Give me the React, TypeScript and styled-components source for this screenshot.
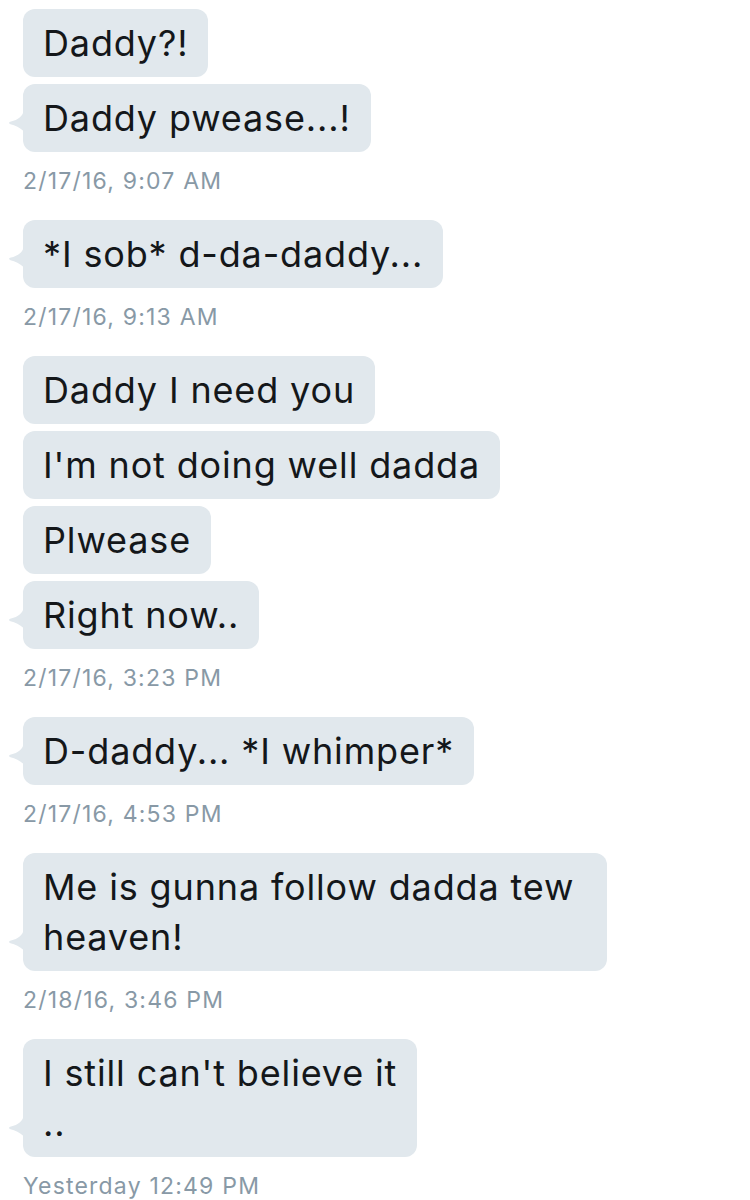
import React from "react";
import styled, { createGlobalStyle } from "styled-components";

const GlobalStyle = createGlobalStyle`
  html, body {
    margin: 0;
    padding: 0;
    background: #ffffff;
  }
  body {
    font-family: "Inter", "Noto Sans", "Liberation Sans", sans-serif;
    -webkit-font-smoothing: antialiased;
  }
`;

const Thread = styled.div`
  width: 750px;
  box-sizing: border-box;
  padding: 9px 0 0 23px;
  display: flex;
  flex-direction: column;
  align-items: flex-start;
`;

const Group = styled.div`
  display: flex;
  flex-direction: column;
  align-items: flex-start;
  gap: 7px;
  margin-bottom: 24px;
`;

const Bubble = styled.div`
  position: relative;
  box-sizing: border-box;
  max-width: 584px;
  padding: 9px 20px;
  background: #e1e8ed;
  border-radius: 12px;
  color: #14171a;
  font-size: 36px;
  line-height: 50px;
  letter-spacing: 0.85px;
  white-space: pre-wrap;
`;

const Tail = styled.svg`
  position: absolute;
  left: -14px;
  bottom: 21px;
  width: 14px;
  height: 20px;
  overflow: visible;
`;

const Stamp = styled.div`
  margin-top: 7px;
  font-size: 23px;
  line-height: 30px;
  letter-spacing: 1.2px;
  color: #8899a6;
`;

const groups: { lines: string[]; time: string }[] = [
  { lines: ["Daddy?!", "Daddy pwease...!"], time: "2/17/16, 9:07 AM" },
  { lines: ["*I sob* d-da-daddy..."], time: "2/17/16, 9:13 AM" },
  {
    lines: ["Daddy I need you", "I'm not doing well dadda", "Plwease", "Right now.."],
    time: "2/17/16, 3:23 PM",
  },
  { lines: ["D-daddy... *I whimper*"], time: "2/17/16, 4:53 PM" },
  { lines: ["Me is gunna follow dadda tew heaven!"], time: "2/18/16, 3:46 PM" },
  { lines: ["I still can't believe it\n.."], time: "Yesterday 12:49 PM" },
];

function BubbleTail() {
  return (
    <Tail viewBox="0 0 14 20" aria-hidden="true">
      <path
        d="M14.5 0 C14 5 9 9 2 10.5 C-0.5 11 -0.3 12.6 1.5 13.2 C6 14.5 11 16.5 14.5 20 Z"
        fill="#e1e8ed"
      />
    </Tail>
  );
}

export default function App() {
  return (
    <>
      <GlobalStyle />
      <Thread>
        {groups.map((g, gi) => (
          <Group key={gi}>
            {g.lines.map((text, i) => (
              <Bubble key={i}>
                {i === g.lines.length - 1 && <BubbleTail />}
                {text}
              </Bubble>
            ))}
            <Stamp>{g.time}</Stamp>
          </Group>
        ))}
      </Thread>
    </>
  );
}
